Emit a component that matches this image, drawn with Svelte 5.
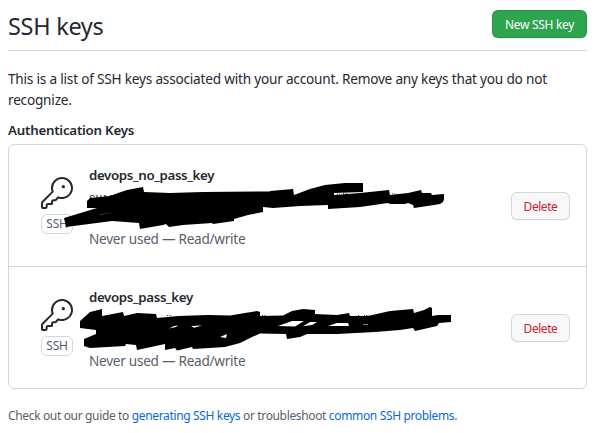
<script>
  const keys = [
    {
      name: 'devops_no_pass_key',
      view: '9 145 577 121',
      ink: 'M87 201L90 198 110 196 118 193 127 190 143 187 144 192 170 193 203 192 270 191.5 270 191 293 189 294 195 310 189 325 185 345 183 363 183 363 192 334 193 334 195 360 193 389 190 390 195 408 193 421 190 422 193 431 193 432 195 444 194 444 199 443 202 440 204 434 205 414 208 413 205 408 203 405 204 390 204 388 203 360 207 328 209 328 205 300 206 273 208 263 207 263 212 248 215 234 219 234 221 213 224 212 223 183 225 169 227 166 224 163 225 140 229 139 223 112 221 66 227 64 218 97 208 87 208Z',
      gaps: 'M100 214.4L115 212 100 214.8Z',
      glints: 'M337 194h3M343 193.7h5M392 194h5'
    },
    {
      name: 'devops_pass_key',
      view: '9 267 577 121',
      ink: 'M80 321L90 312 102 309 102 316 123 312 124 316 137 313 156 314 157 318 178 316 208 315 230 315.5 245 313 257 311 260 312 260 316 283 315.5 292 311 303 309 315 310 315 314 337 315 349 313 350 316 368 316 390 311 413 309 414 313 424 310 430 307 432 308 432 316 438 315 451 315 451 322 439 323 437 326 415 331 413 328 400 330 375 332 337 334 307 334 300 337 287 339 286 334 260 333.5 252 337 240 343 225 347 193 349 192 347 177 350.5 175 348 165 350 165 344 137 350 136 345 126 344 125 346 90 348 84 346 84 339 96 334 96 330 80 328Z',
      gaps: 'M278 326L292 321 304 321 295 326.5ZM303 326.3L310 322 317 322 312 325ZM328 326L337 323 348 323 349 326ZM169 328.5L174 326 178 325.5 176 327ZM191 326L202 325.5 194 327.8ZM220 337L227 334 226 338ZM363 324.5h5v.6h-5Z',
      glints: 'M167 315.5h5M262 315.5h4M358 315.5h2M364 315.5h5'
    }
  ];
</script>

<main>
  <header>
    <h2>SSH keys</h2>
    <button class="primary">New SSH key</button>
  </header>
  <p class="intro">
    This is a list of SSH keys associated with your account. Remove any keys that you do not<br />recognize.
  </p>
  <h3>Authentication Keys</h3>
  <ul>
    {#each keys as key}
      <li>
        <div class="kind">
          <svg class="icon" width="32" height="32" viewBox="0 0 24 24">
            <path d="M16.75 8.5a1.25 1.25 0 100-2.5 1.25 1.25 0 000 2.5z" />
            <path fill-rule="evenodd" d="M15.75 0a8.25 8.25 0 00-7.851 10.79L.513 18.178A1.75 1.75 0 000 19.414v2.836C0 23.217.784 24 1.75 24h1.5A1.75 1.75 0 005 22.25v-1a.25.25 0 01.25-.25h2.735a.75.75 0 00.545-.22l.214-.213A.875.875 0 009 19.948V18.5a.25.25 0 01.25-.25h1.086c.464 0 .91-.184 1.237-.513l1.636-1.636A8.25 8.25 0 1015.75 0zM9 8.25a6.75 6.75 0 114.288 6.287.75.75 0 00-.804.168l-1.971 1.972a.25.25 0 01-.177.073H9.25A1.75 1.75 0 007.5 18.5v1H5.25a1.75 1.75 0 00-1.75 1.75v1a.25.25 0 01-.25.25h-1.5a.25.25 0 01-.25-.25v-2.836a.25.25 0 01.073-.177l7.722-7.721a.75.75 0 00.168-.804A6.73 6.73 0 019 8.25z" />
          </svg>
          <span class="badge">SSH</span>
        </div>
        <div class="details">
          <strong>{key.name}</strong>
          <code>SHA256:</code>
          <span class="usage">Never used — Read/write</span>
        </div>
        <button class="danger">Delete</button>
        <svg class="redaction" viewBox={key.view}>
          <path d={key.ink} />
          <path d={key.gaps} fill="#fff" />
          <path d={key.glints} stroke="#24292f" stroke-dasharray="1 1.3" />
        </svg>
      </li>
    {/each}
  </ul>
  <p class="guide">Check out our guide to <a href="#generating">generating SSH keys</a> or troubleshoot <a href="#problems">common SSH problems</a>.</p>
</main>

<style>
  :global(body) { margin: 0; background: #fff; }
  main {
    box-sizing: border-box;
    height: 433px;
    padding: 0 12px 0 8px;
    overflow: hidden;
    font: 13.6px/21px 'Noto Sans', sans-serif;
    letter-spacing: -.2px;
    color: #24292f;
    white-space: nowrap;
  }
  header {
    box-sizing: border-box;
    height: 51px;
    display: flex;
    justify-content: space-between;
    align-items: flex-start;
    border-bottom: 1px solid #d0d7de;
  }
  h2 { margin: 8px 0 0; font-size: 23.5px; line-height: 36px; font-weight: 400; letter-spacing: -.3px; }
  button {
    box-sizing: border-box;
    height: 28px;
    padding: 1px 0 0;
    border: 1px solid rgba(27, 31, 36, .15);
    border-radius: 6px;
    font: 12px/20px 'Noto Sans', sans-serif;
    letter-spacing: -.3px;
  }
  .primary { width: 95px; margin-top: 10px; background: #2da44e; color: #fff; box-shadow: 0 1px 0 rgba(27, 31, 36, .1); }
  .danger { width: 59px; margin-left: auto; padding-top: 2px; background: #f6f8fa; color: #cf222e; box-shadow: 0 1px 0 rgba(27, 31, 36, .04); letter-spacing: -.45px; }
  .intro { margin: 17px 0 10px; }
  h3 { margin: 0; font-size: 13.3px; line-height: 21px; font-weight: 600; letter-spacing: -.23px; }
  ul {
    margin: 3px 0 0;
    padding: 0;
    border: 1px solid #d0d7de;
    border-radius: 6px;
    list-style: none;
  }
  li {
    position: relative;
    box-sizing: border-box;
    height: 121px;
    padding: 0 16px 0 32px;
    display: flex;
    align-items: center;
  }
  li + li { height: 122px; border-top: 1px solid #d0d7de; }
  .kind { width: 48px; height: 57px; display: flex; flex-direction: column; gap: 5px; }
  .icon { display: block; fill: #24292f; }
  .badge {
    box-sizing: border-box;
    width: 32px;
    height: 20px;
    border: 1px solid #d0d7de;
    border-radius: 6px;
    color: #57606a;
    font-size: 12px;
    line-height: 18px;
    text-align: center;
  }
  .details { display: flex; flex-direction: column; height: 82px; }
  .details > * { flex-shrink: 0; }
  strong { font-size: 13.3px; font-weight: 600; line-height: 21px; letter-spacing: -.36px; }
  code { margin-top: 3px; font: 11px/21px 'Liberation Mono', monospace; }
  .usage { margin-top: 18px; color: #57606a; letter-spacing: -.27px; }
  .redaction { position: absolute; left: 0; top: 0; width: 577px; height: 121px; pointer-events: none; }
  .guide { margin: 18px 0 0; font-size: 12px; line-height: 18px; letter-spacing: -.35px; color: #57606a; }
  a { color: #0969da; text-decoration: none; }
</style>
